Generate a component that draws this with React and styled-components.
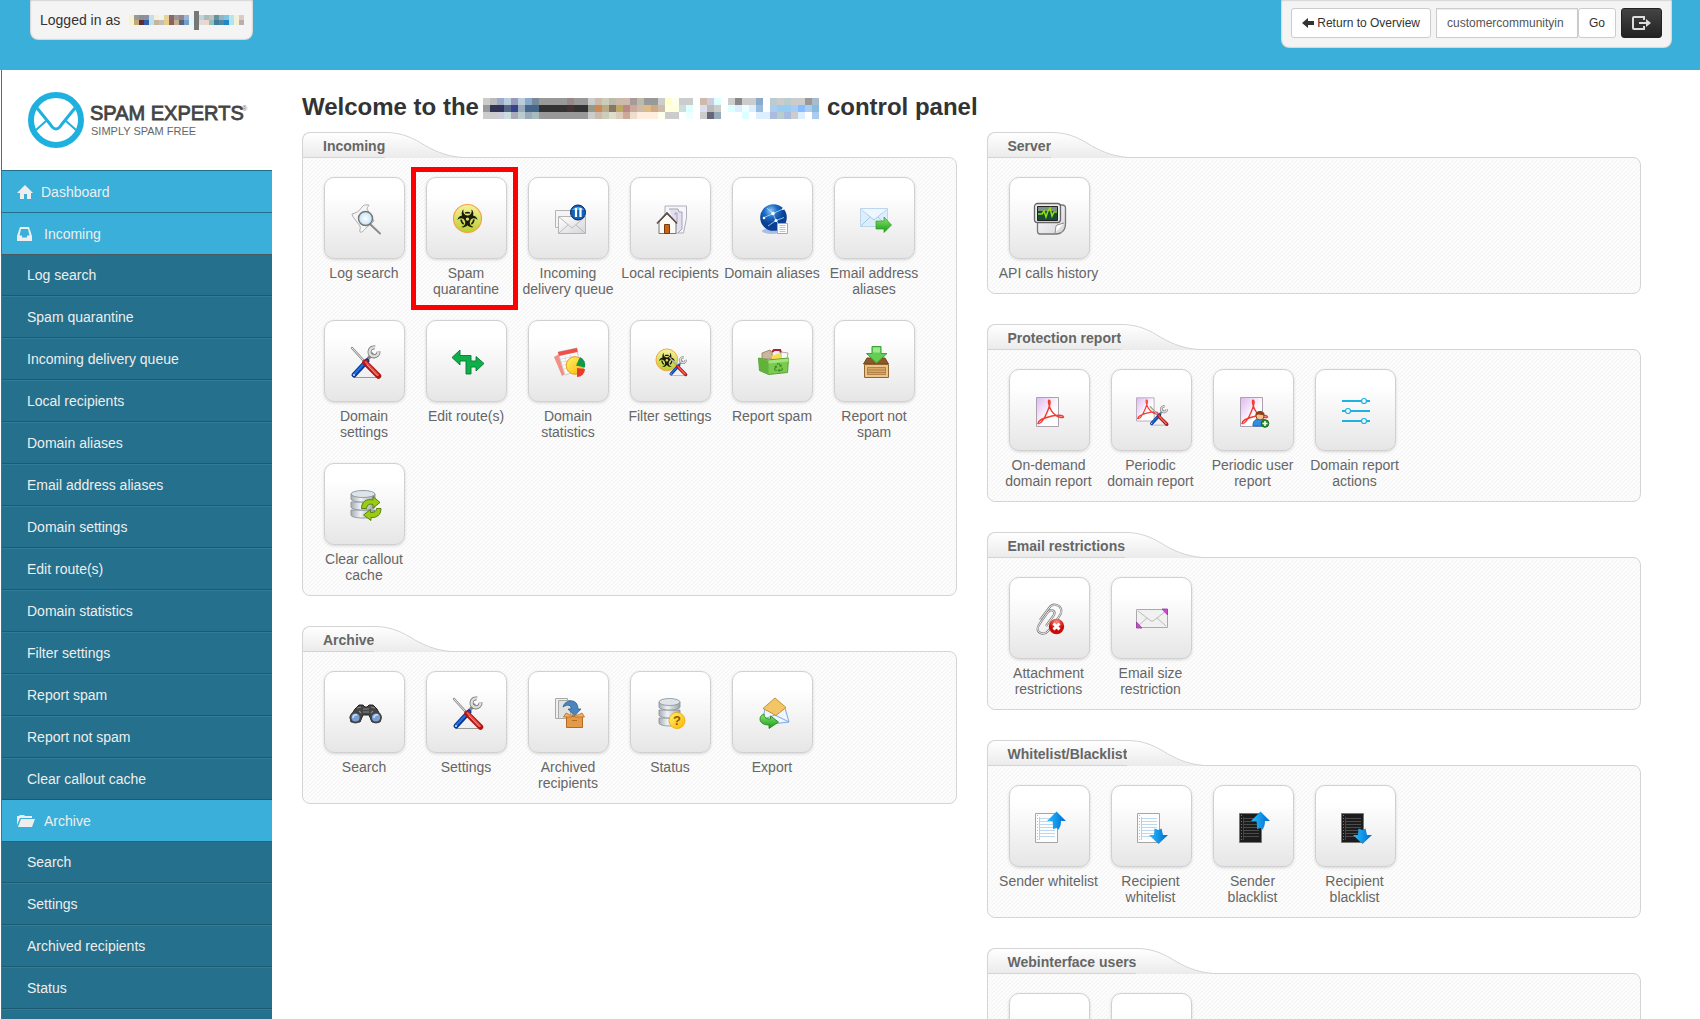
import React from "react";
import styled, { createGlobalStyle, css } from "styled-components";
import { FaBiohazard, FaRecycle } from "react-icons/fa";

const GlobalStyle = createGlobalStyle`
  * {
    box-sizing: border-box;
  }
  body {
    margin: 0;
    background: #fff;
    color: #333;
    font-family: "Liberation Sans", Arial, sans-serif;
    font-size: 14px;
  }
  a {
    color: inherit;
    text-decoration: none;
  }
`;

/* ---------- layout ---------- */

const Page = styled.div`
  display: flex;
  flex-direction: column;
  min-height: 100vh;
`;

const Header = styled.header`
  display: flex;
  flex: none;
  align-items: flex-start;
  justify-content: space-between;
  height: 70px;
  padding: 0 28px 0 30px;
  background: #3aafda;
`;

const HeaderTab = styled.div`
  display: flex;
  align-items: center;
  padding: ${(props) => (props.$tools ? "8px 10px 10px" : "12px 9px 12px 10px")};
  border-radius: 0 0 8px 8px;
  background: #f4f4f4;
  line-height: 16px;
  box-shadow: inset 0 0 2px rgba(0, 0, 0, 0.4);
`;

const Content = styled.div`
  display: flex;
  flex: 1;
  margin-left: 1px;
  border-left: 1px solid #666;
`;

const Sidebar = styled.aside`
  flex: none;
  width: 270px;
`;

const LogoLink = styled.a`
  display: block;
  height: 100px;
  padding: 20px 0 0 24px;
`;

const Main = styled.main`
  flex: 1;
  padding: 22px 59px 30px 30px;
`;

const Title = styled.h1`
  display: flex;
  align-items: center;
  margin: 0 0 10px;
  font-size: 24px;
  line-height: 30px;
  white-space: nowrap;
  svg {
    margin: 2px 8px 0 4px;
  }
`;

const Columns = styled.div`
  display: grid;
  grid-template-columns: 1fr 1fr;
  gap: 30px;
  align-items: start;
`;

const Column = styled.div`
  display: flex;
  flex-direction: column;
  gap: 30px;
`;

/* ---------- header controls ---------- */

const control = css`
  height: 30px;
  border: 1px solid #ccc;
  background: #fff;
  font-family: inherit;
  font-size: 12px;
  line-height: 18px;
`;

const Button = styled.button`
  ${control}
  display: flex;
  align-items: center;
  gap: 2px;
  padding: 0 10px;
  border-radius: 3px;
  color: #333;
  cursor: pointer;
  ${(props) =>
    props.$dark &&
    css`
      border-color: #222;
      background: linear-gradient(#444, #222);
    `}
`;

const SearchForm = styled.form`
  display: flex;
  margin: 0 5px;
`;

const SearchInput = styled.input`
  ${control}
  width: 142px;
  padding: 0 10px;
  color: #555;
  box-shadow: inset 0 1px 1px rgba(0, 0, 0, 0.08);
`;

/* ---------- sidebar ---------- */

const Nav = styled.nav`
  border-top: 1px solid #1f6f8d;
  background: #25708c;
`;

const NavHead = styled.a`
  display: flex;
  align-items: center;
  height: 42px;
  padding-left: 15px;
  border-bottom: 1px solid ${(props) => (props.$open ? "#4a5860" : "#1f6f8d")};
  background: #3aafda;
  color: #eee;
  svg {
    margin-right: 8px;
  }
`;

const NavList = styled.ul`
  margin: 0;
  padding: 0;
  list-style: none;
  li + li {
    border-top: 1px solid #2e7d9a;
  }
`;

const NavItem = styled.a`
  display: block;
  padding-left: 25px;
  border-bottom: 1px solid #1c5a72;
  color: #eee;
  line-height: 40px;
`;

/* ---------- panels ---------- */

const PanelHead = styled.div`
  display: flex;
  position: relative;
  height: 26px;
  margin-bottom: -1px;
  h2 {
    margin: 0;
    padding-left: 20px;
    border: 1px solid #d4d4d4;
    border-right: 0;
    border-radius: 8px 0 0 0;
    background: linear-gradient(#fff, #ebebeb);
    color: #666;
    font-size: 14px;
    line-height: 26px;
  }
`;

const PanelBody = styled.div`
  display: flex;
  flex-wrap: wrap;
  row-gap: 23px;
  padding: 19px 30px 12px 10px;
  border: 1px solid #d4d4d4;
  border-radius: 0 8px 8px 8px;
  background: linear-gradient(
    135deg,
    #fdfdfd 25%,
    #f7f7f7 25% 50%,
    #fdfdfd 50% 75%,
    #f7f7f7 75%
  );
  background-size: 4px 4px;
`;

const Shortcut = styled.a`
  position: relative;
  width: 102px;
  color: #666;
  text-align: center;
  line-height: 16px;
  ${(props) =>
    props.$marked &&
    css`
      &::after {
        content: "";
        position: absolute;
        inset: -10px -1px -13px -4px;
        border: 5px solid #f00;
      }
    `}
`;

const Tile = styled.span`
  display: block;
  width: 81px;
  height: 82px;
  margin: 0 0 6px 11px;
  padding: 24px 0 0 24px;
  border: 1px solid #d0d0d0;
  border-radius: 10px;
  background: linear-gradient(#fff 20%, #e6e6e6);
  box-shadow: 0 1px 3px rgba(0, 0, 0, 0.15);
  svg {
    display: block;
    overflow: visible;
  }
`;

const Label = styled.span`
  display: block;
  width: 100px;
  margin: 0 1px;
  white-space: pre-line;
`;

/* ---------- pixelated names ---------- */

const USER_ROWS = [
  "fff f4f5cf 999 8d8f97 8d8fa0 bfe0f0 f5f0da f0f4ea e4d49a 8c6666 a0949a 8f8790 a0b5d5 e5f5fa 777 c0d5d8 a8bcc0 c2c2ba 6790a0 94b4c0 7fc4e0 b5e5f0 f4f0d8 dccbc4",
  "fff f4f5cf c4a87a 5a3034 3060a8 bfe0f0 c4b4a0 c0c0bc e4d08c 8a6060 c0b090 606080 70a0c8 e5f5fa 777 dcdcdc f0d5cc 94c0bc 3f7f9c 5088a4 2088c4 b0e4f0 f4f0d8 b8b0b0",
];

const DOMAIN_ROWS = [
  "ccc bbb 9ac bcd 99b bcd 8ac 789 999 999 999 999 988 999 999 ccc cba ccb bba cba cba a99 bba 999 999 ccc ffc ffe ccc ccc fff cba ccd dff fff ccc 888 ccc ccc 8ac fff bcc ccc bcc ccc ccc 999 abc",
  "999 335 335 568 348 9ab 468 468 333 333 333 333 433 333 333 998 c85 ba8 876 ba6 b88 ca9 cba db8 ca8 cba ffd ffd cdd dff fff dde bbb ccc fff dff def eff def 9bd fff ace 9ce 9ce ace 8bf ace 8bd",
  "ccc ccc ccd cdd aab bcc 9ab abb 999 999 999 999 999 999 999 ccc cba ccb ddc dcb ca9 edc fed fed fed ffe ccc ccc fff eff fff ccc 667 9ab fff fff fff dff fff def def abd bcc abd ccc def fff ace",
];

const Mosaic = ({ rows, cell, label, children }) => {
  const count = rows[0].split(" ").length;
  return (
    <svg
      width={count * cell}
      height={rows.length * cell}
      role="img"
      aria-label={label}
      shapeRendering="crispEdges"
      overflow="visible"
    >
      {rows.map((row, y) =>
        row
          .split(" ")
          .map(
            (color, x) =>
              color !== "fff" && (
                <rect
                  key={`${x}-${y}`}
                  x={x * cell}
                  y={y * cell}
                  width={cell}
                  height={cell}
                  fill={`#${color}`}
                />
              )
          )
      )}
      {children}
    </svg>
  );
};

/* ---------- logo and small glyphs ---------- */

const Logo = () => (
  <svg width="228" height="60" role="img" aria-label="SpamExperts">
    <g fill="none" stroke="#1eb0df">
      <circle cx="30" cy="30" r="25" strokeWidth="6" />
      <path
        d="M11 18l13 16q3 5 6 5t6-5l13-16"
        strokeWidth="3"
        strokeLinejoin="round"
      />
      <path d="M10 40l10-9M50 40l-10-9" strokeWidth="2" />
    </g>
    <text
      x="64"
      y="30"
      fontSize="20"
      fill="#444"
      stroke="#444"
      strokeWidth="0.8"
    >
      SPAM EXPERTS
    </text>
    <text x="65" y="45" fontSize="11" fill="#666">
      SIMPLY SPAM FREE
    </text>
    <text x="216" y="21" fontSize="7" fill="#666">
      ®
    </text>
  </svg>
);

const HomeGlyph = () => (
  <svg width="16" height="16" fill="#eee">
    <path d="M8 1l8 8h-2v6h-4v-5H7v5H3V9H0z" />
  </svg>
);

const InboxGlyph = () => (
  <svg width="19" height="16" fill="#eee" fillRule="evenodd">
    <path d="M3 1h9l3 9v5H0v-5zM4 3L2.500 9.500H5v2h5v-2h2.500L11 3z" />
  </svg>
);

const FolderGlyph = () => (
  <svg width="19" height="16" fill="#eee">
    <path d="M0 3h2l1-1h4l1 1h7v2H3L0 12zM4 6h14l-3 8H1z" />
  </svg>
);

const BackGlyph = () => (
  <svg width="13" height="12" fill="#333">
    <path d="M0 6l6-5v3h6v4H6v3z" />
  </svg>
);

const LogoutGlyph = () => (
  <svg width="19" height="18" fill="none" stroke="#ddd" strokeWidth="2">
    <path d="M12 6V3H2q-1 0-1 1v10q0 1 1 1h10v-3M7 9h8" />
    <path d="M14 5l5 4-5 4z" fill="#ddd" stroke="none" />
  </svg>
);

/* ---------- shortcut icons, all on a 32px box ---------- */

const Gradients = () => (
  <svg width="0" height="0" style={{ position: "absolute" }} aria-hidden="true">
    <defs>
      <linearGradient id="bio" x2="0" y2="1">
        <stop stopColor="#f6f39a" />
        <stop offset="1" stopColor="#b9cf2c" />
      </linearGradient>
      <linearGradient id="gold" x2="1" y2="1">
        <stop stopColor="#fff36a" />
        <stop offset="1" stopColor="#ffb400" />
      </linearGradient>
      <linearGradient id="blueArrow">
        <stop stopColor="#25c0ff" />
        <stop offset="1" stopColor="#0069cf" />
      </linearGradient>
      <linearGradient id="green" x2="0" y2="1">
        <stop stopColor="#8be870" />
        <stop offset="1" stopColor="#169a14" />
      </linearGradient>
      <linearGradient id="steel">
        <stop stopColor="#a5adb4" />
        <stop offset="0.4" stopColor="#f0f3f5" />
        <stop offset="1" stopColor="#9aa2aa" />
      </linearGradient>
      <linearGradient id="lilac" x2="1" y2="1">
        <stop stopColor="#e0b8f0" />
        <stop offset="0.6" stopColor="#fff" />
      </linearGradient>
      <linearGradient id="paper" x2="1" y2="1">
        <stop stopColor="#fff" />
        <stop offset="1" stopColor="#d5d5d9" />
      </linearGradient>
      <radialGradient id="globe" cx="0.4" cy="0.25">
        <stop stopColor="#8ecbf5" />
        <stop offset="0.5" stopColor="#1c6cc4" />
        <stop offset="1" stopColor="#0b3f92" />
      </radialGradient>
      <radialGradient id="lens">
        <stop stopColor="#fff" />
        <stop offset="1" stopColor="#bfe2f8" />
      </radialGradient>
      <radialGradient id="red" cy="0.2">
        <stop stopColor="#ff8a80" />
        <stop offset="1" stopColor="#c80c08" />
      </radialGradient>
    </defs>
  </svg>
);

const Icon = ({ children }) => (
  <svg width="32" height="32" viewBox="0 0 32 32" aria-hidden="true">
    {children}
  </svg>
);

const ToolsShape = () => (
  <g strokeLinecap="round" fill="none">
    <path d="M5 32.500h25" stroke="#999" strokeWidth="1" />
    <path d="M3 3l12 13" stroke="#888" strokeWidth="2.400" />
    <path d="M3 3l12 13" stroke="#eee" strokeWidth="1" />
    <path d="M18 15l5-6" stroke="#888" strokeWidth="3.500" />
    <path
      d="M26 2.500a4.500 4.500 0 1 0 3.500 4"
      stroke="#777"
      strokeWidth="4"
      strokeLinecap="butt"
    />
    <path
      d="M26 2.500a4.500 4.500 0 1 0 3.500 4"
      stroke="#ddd"
      strokeWidth="2.400"
      strokeLinecap="butt"
    />
    <path d="M18 16L5 30" stroke="#0a3590" strokeWidth="5" />
    <path d="M17.500 16L5 29.500" stroke="#1e6fe0" strokeWidth="2.500" />
    <circle cx="5" cy="30" r="1" fill="#cfe2ff" />
    <path d="M16 17.500L29.500 31" stroke="#b01512" strokeWidth="5.500" />
    <path d="M16.500 17L29 30" stroke="#f05048" strokeWidth="2" />
    <path d="M18 20l10 10.500" stroke="#ffc9c4" strokeWidth="0.700" />
  </g>
);

const BioShape = () => (
  <>
    <circle
      cx="16.500"
      cy="16.500"
      r="14"
      fill="url(#bio)"
      stroke="#f7a04a"
      strokeWidth="1.200"
    />
    <FaBiohazard x="6.500" y="6.500" size={20} color="#1a1a10" />
  </>
);

const PdfShape = () => (
  <>
    <path d="M2.500 3.500h22v29h-22z" fill="url(#lilac)" stroke="#a9a0b0" />
    <path
      d="M4 29.500c0-3 7-6 14-7.500s11-.5 11.500.8-4 1-7-1-6.500-7-7.500-11-.5-5 .5-4.500.5 5-2 11-6.500 13-9.500 12.200z"
      fill="none"
      stroke="#f33b30"
      strokeWidth="1.400"
    />
  </>
);

const CylinderShape = ({ x, width }) => (
  <g
    transform={`translate(${x} 0) scale(${width / 24} 1)`}
    fill="url(#steel)"
    stroke="#8a939b"
    strokeWidth="0.900"
  >
    {[20, 12, 4].map((y) => (
      <path key={y} d={`M0 ${y + 2}v5c0 4 24 4 24 0v-5z`} />
    ))}
    <ellipse cx="12" cy="6" rx="12" ry="3.500" fill="#dfe4e8" />
  </g>
);

const ListPage = ({ dark }) => (
  <>
    <path
      d="M1.500 3.500h22v29h-22z"
      fill={dark ? "#1c1c1c" : "#fdfdfd"}
      stroke={dark ? "#777" : "#a5a5a5"}
    />
    <path
      d="M3.500 5v26"
      stroke={dark ? "#777" : "#bbb"}
      strokeDasharray="1 2"
    />
    <path d="M5.500 7v23" stroke={dark ? "#444" : "#ffb4b4"} />
    <path
      d="M6 8.500h15M6 11.500h15M6 14.500h15M6 17.500h15M6 20.500h15M6 23.500h15M6 26.500h15"
      stroke={dark ? "#4c4c4c" : "#bcd8f0"}
    />
  </>
);

const ArrowUpShape = () => (
  <path
    d="M22.500 1.500L32 11h-5c0 4-1 7-3 9l-1-2-4 1c0-2 0-5-.5-8H13z"
    fill="url(#blueArrow)"
  />
);

const ArrowDownShape = () => (
  <path
    d="M22.500 34L13 25h5l.5-6.500 4 1.500 3-1.500L27 25h5z"
    fill="url(#blueArrow)"
  />
);

const ICONS = {
  logSearch: (
    <>
      <path
        d="M3 12c4-1 8-3 10-7 1-2 4-2.500 7-2 0 1-2 2-2 4l7 12-8 7c-2 2-4 5-6 4-1-2 1-3 0-6L5 16c-1-1-2-3-2-4z"
        fill="#f6f6f6"
        stroke="#a5a5a5"
        strokeWidth="0.900"
      />
      <path
        d="M21.500 22.500L31 31.500"
        stroke="#8c8c8c"
        strokeWidth="2"
        strokeLinecap="round"
      />
      <circle
        cx="16.500"
        cy="16.500"
        r="7"
        fill="url(#lens)"
        stroke="#777"
        strokeWidth="1.500"
      />
    </>
  ),
  bio: <BioShape />,
  queue: (
    <>
      <path d="M2.500 8.500h26v17h-26z" fill="#f4f4f4" stroke="#b5b5b5" />
      <path d="M5.500 14.500h27v17h-27z" fill="url(#paper)" stroke="#b5b5b5" />
      <path
        d="M6 15l13 11 13-11M6 31l9-8M32 31l-9-8"
        fill="none"
        stroke="#bbb"
      />
      <circle cx="25" cy="10.500" r="7.500" fill="#0f63bb" stroke="#0a1f55" />
      <path d="M19 8a7 6 0 0 1 12 0z" fill="#3fb0f0" />
      <path d="M23 6v9M27.500 6v9" stroke="#fff" strokeWidth="2.200" />
    </>
  ),
  house: (
    <>
      <path
        d="M10 4h21.500v12l-3 15H15L10 20z"
        fill="#f6f5fa"
        stroke="#b0aebc"
      />
      <path
        d="M14 7h9l1 3h3v17l-4 4M20 13v-2h2v9"
        fill="#e2e0ee"
        stroke="#a5a3b5"
      />
      <path d="M4 20l8-8 9 8v11.500H4z" fill="#fcfaf4" stroke="#777" />
      <path
        d="M2 21.500l10-10.500 10 10.500"
        fill="none"
        stroke="#5c5048"
        strokeWidth="1.800"
      />
      <path d="M9.500 22.500h5v9h-5z" fill="#c9651a" stroke="#7a3a0c" />
    </>
  ),
  globe: (
    <>
      <ellipse cx="15" cy="29" rx="10" ry="3" fill="#a8bfe4" />
      <circle cx="16.500" cy="15.500" r="13.300" fill="url(#globe)" />
      <path
        d="M6 16l10-4.500 11-5M16 11.500l3 7 8-3M10 6l6 5.500M19 18.500L11 24M19 18.500l4 5"
        fill="none"
        stroke="#b8dcff"
        strokeWidth="0.800"
      />
      <g fill="#fff">
        <circle cx="16" cy="11.500" r="1.800" />
        <circle cx="19" cy="18.500" r="1.500" />
        <circle cx="7" cy="16" r="1.300" />
        <circle cx="26" cy="7" r="1" />
      </g>
      <path d="M20.500 21.500h10v10h-10z" fill="#fff" stroke="#aaa" />
      <path
        d="M22.500 23.500h6M22.500 25.500h6M22.500 27.500h6M22.500 29.500h6"
        stroke="#bbb"
        strokeWidth="0.900"
      />
    </>
  ),
  forward: (
    <>
      <path d="M1.500 6.500h27v18h-27z" fill="#dceefd" stroke="#bcd6ec" />
      <path
        d="M2 7l13 11L28 7M2 24l9-9M28 24l-9-9"
        fill="none"
        stroke="#9cc4e4"
        strokeWidth="0.900"
      />
      <path d="M2 7l13 10L28 7z" fill="#eef7ff" />
      <path
        d="M17 19h8v-4l7.500 8-7.500 7.500V27h-8z"
        fill="url(#green)"
        stroke="#2d9c20"
        strokeWidth="0.700"
      />
    </>
  ),
  tools: <ToolsShape />,
  route: (
    <path
      d="M1 12.500L9 5v5.500h11v5.500h5v-4.500l8 7-8 7.500v-4h-5v7h-5V16H9v4z"
      fill="#0fb04b"
      stroke="#067a30"
      strokeWidth="0.900"
    />
  ),
  stats: (
    <>
      <path d="M1 12l5-3 6 20-3 2z" fill="#f58e84" />
      <path d="M5 7l19-4 3 22-15 5z" fill="#fafafa" stroke="#ccc" />
      <path d="M5 7l19-4 .6 4L6 11z" fill="#ee5148" />
      <path
        d="M8 14l14-3M9 17l13-3M10 20l8-2M11 24l6-1M12 11l3 16M17 10l2 10"
        stroke="#d8d8d8"
        strokeWidth="0.800"
      />
      <circle cx="22" cy="20.500" r="8.800" fill="url(#gold)" stroke="#e3a01a" />
      <path d="M23 20.500L27 12a9 9 0 0 1 5 10.500z" fill="#12984a" />
      <path d="M24 23l8 1a8 8 0 0 1-8 8z" fill="#e83b30" />
    </>
  ),
  filter: (
    <>
      <g transform="translate(-1 2) scale(.78)">
        <BioShape />
      </g>
      <g transform="translate(13 11) scale(.6)">
        <ToolsShape />
      </g>
    </>
  ),
  spamBin: (
    <>
      <path d="M5 8l8-3 4 9H5z" fill="#cbb79c" stroke="#a08c70" />
      <path d="M15 6l9-1 1 9h-9z" fill="#f0eee8" stroke="#b5b0a5" />
      <path d="M15 7l2-2h6l1 3" fill="none" stroke="#a5232e" strokeWidth="2" />
      <path d="M24 7l7 1-1 6h-6z" fill="#f7f7f7" stroke="#aaa" />
      <path d="M15 11l8-3 2 6H15z" fill="#f6dc4e" />
      <path
        d="M1.500 13l10 2 20-2-1 14.500-19 2-9-4z"
        fill="#7ccb51"
        stroke="#57a332"
      />
      <path d="M2 13.500l9.500 2.500v13l-9-3.500z" fill="#61b23a" />
      <path d="M11.500 15.500l20-2v3l-20 2z" fill="#a5e382" />
      <FaRecycle x="17" y="18" size={9} color="#3f8f24" />
    </>
  ),
  crate: (
    <>
      <path d="M8 13h18l3.500 6h-25z" fill="#8a5a28" stroke="#70451c" />
      <path d="M5.500 19.500h24v13h-24z" fill="#ebc48c" stroke="#94662f" />
      <path
        d="M8.500 22.500h18v7h-18z"
        fill="#d8a868"
        stroke="#a8763a"
        strokeWidth="0.800"
      />
      <path d="M9 25h17M9 27.500h17" stroke="#a8763a" strokeWidth="0.800" />
      <path
        d="M13 1.500h9v7h6L17.500 18 7.500 8.500H13z"
        fill="#62cf52"
        stroke="#3fa136"
      />
      <path d="M14 2.500h7v5h-7z" fill="#9be88e" />
    </>
  ),
  cache: (
    <>
      <CylinderShape x={2} width={24} />
      <g fill="#9ccc12" stroke="#4d7a06" strokeWidth="0.900">
        <path d="M12.500 20.500c0-7 5-10 11.500-8.500V8.500l7 6-7 5.500v-3.500c-4-1-6 0-6.500 4z" />
        <path d="M32 20.500c0 7-5 9.500-10 9v3l-7.500-5.500 7-5.500v3c4 0 6-1 6-4z" />
      </g>
    </>
  ),
  binoculars: (
    <>
      <path
        d="M1 21l5-8 4-4h4l2 2h2l2-2h4l4 4 4 8-1 5h-8l-3-7h-6l-3 7H2z"
        fill="#454545"
        stroke="#222"
      />
      <path
        d="M8 12l4-1M22 11l4 1M14 13h6M14 16h6M10 15l2 2M24 15l-2 2"
        stroke="#888"
        strokeWidth="1.200"
      />
      <circle
        cx="6.500"
        cy="21.500"
        r="5"
        fill="#7a9fd8"
        stroke="#444"
        strokeWidth="1.800"
      />
      <circle
        cx="27"
        cy="21.500"
        r="5"
        fill="#7a9fd8"
        stroke="#444"
        strokeWidth="1.800"
      />
      <path
        d="M4 22a3 3 0 0 1 4-3M25 22a3 3 0 0 1 4-3"
        fill="none"
        stroke="#cfe0ff"
        strokeWidth="1.500"
      />
    </>
  ),
  archived: (
    <>
      <path d="M2.500 2.500h12v20h-12z" fill="#eef0ee" stroke="#a8aaa8" />
      <path d="M5.500 4.500h12v18h-12z" fill="#dfe3df" stroke="#a8aaa8" />
      <path
        d="M10 11c2-8 15-9 15 2h3l-6.500 7-6.500-7h3.500c0-4-4-5-8.500-2z"
        fill="#4a86bd"
        stroke="#2c6194"
        strokeWidth="0.800"
      />
      <path d="M13.500 20.500h16v11h-16z" fill="#e59a4a" stroke="#b46a20" />
      <path
        d="M13 17l-2.500 4h8l2-2.500 2 2.500h9L29 17l-4 2h-8z"
        fill="#f0b069"
        stroke="#b46a20"
        strokeWidth="0.800"
      />
      <path d="M19 24.500h5" stroke="#b46a20" />
    </>
  ),
  status: (
    <>
      <CylinderShape x={4} width={21} />
      <circle
        cx="22"
        cy="24.500"
        r="8"
        fill="url(#gold)"
        stroke="#f0a800"
        strokeWidth="0.800"
      />
      <text
        x="22"
        y="29"
        fontSize="13"
        fontWeight="bold"
        fill="#8a5a00"
        textAnchor="middle"
      >
        ?
      </text>
    </>
  ),
  exportMail: (
    <>
      <path d="M8 12l20 0 4 14-17 2-9-4z" fill="#eef5ff" stroke="#7fa6dd" />
      <path d="M32 26L18 19 7 23" fill="none" stroke="#7fa6dd" />
      <path
        d="M6 12.500L18 2l11 9.500-10 8z"
        fill="#f2c566"
        stroke="#c08a28"
        strokeWidth="0.900"
      />
      <path
        d="M7 18c-6 2-6 11 5 11v3.500l9.500-6.500-8-6v3c-4 0-6-1-6.500-5z"
        fill="url(#green)"
        stroke="#178010"
        strokeWidth="0.800"
      />
    </>
  ),
  monitor: (
    <>
      <path
        d="M22 3h6q3.500 0 3.500 3v16q0 9-9 10H6q-2.500 0-2.500-3V17"
        fill="url(#paper)"
        stroke="#777"
        strokeWidth="1.300"
      />
      <path d="M21 31c1-3 0-7 2-8s5-1 7-2" fill="#fff" stroke="#888" />
      <rect
        x="0.500"
        y="1.500"
        width="26"
        height="19"
        rx="3"
        fill="#eee"
        stroke="#666"
        strokeWidth="1.300"
      />
      <path d="M3.500 4.500h20v14h-20z" fill="#1a4a3c" stroke="#222" />
      <path d="M4 5h19v4H4z" fill="#7d9089" />
      <path
        d="M4 12h4l2-3 2 6 2-6 2-3 2 8 2-4h3"
        fill="none"
        stroke="#8fe400"
        strokeWidth="1.500"
      />
    </>
  ),
  pdf: <PdfShape />,
  pdfTools: (
    <>
      <g transform="translate(-1.500 1) scale(.8)">
        <PdfShape />
      </g>
      <g transform="translate(12.500 11) scale(.62)">
        <ToolsShape />
      </g>
    </>
  ),
  pdfUser: (
    <>
      <PdfShape />
      <path d="M15 32c0-5 2-7 7-7s7 2 7 7z" fill="#2f8fe8" stroke="#1a64b0" />
      <circle cx="22" cy="22" r="4" fill="#f4c090" stroke="#8c4a1c" />
      <path d="M17.500 21.500c-1-6 10-6 9 0-3 0-6-2-9 0z" fill="#8c4018" />
      <circle cx="27" cy="29.500" r="3.800" fill="#2c8c2c" stroke="#1c661c" />
      <path d="M27 27v5M24.500 29.500h5" stroke="#fff" strokeWidth="1.500" />
    </>
  ),
  sliders: (
    <g stroke="#1cb3e0" strokeWidth="2" fill="#f6f6f6">
      <path d="M2 7h28M2 17h28M2 27h28" />
      <g strokeWidth="1.200">
        <circle cx="24" cy="7" r="2.500" />
        <circle cx="8" cy="17" r="2.500" />
        <circle cx="24" cy="27" r="2.500" />
      </g>
    </g>
  ),
  clip: (
    <>
      <path
        d="M6 18L15 6c4-6 14-3 12 5-1 3-10 15-13 18-4 5-12 2-10-4 1-3 8-12 10-15 3-4 8-1 6 3l-8 11"
        fill="none"
        stroke="#808080"
        strokeWidth="2.200"
      />
      <path
        d="M6 18L15 6c4-6 14-3 12 5-1 3-10 15-13 18-4 5-12 2-10-4 1-3 8-12 10-15 3-4 8-1 6 3l-8 11"
        fill="none"
        stroke="#eee"
        strokeWidth="1"
      />
      <circle cx="22.500" cy="24.500" r="7.700" fill="url(#red)" />
      <path
        d="M19.500 21.500l6 6M25.500 21.500l-6 6"
        stroke="#fff"
        strokeWidth="3"
      />
    </>
  ),
  mailSize: (
    <>
      <path d="M0.500 7.500h31v18h-31z" fill="#f1f1f1" stroke="#aaa" />
      <path
        d="M2 9l13 10h2l13-10M2 24l9-8M30 24l-9-8"
        fill="none"
        stroke="#bbb"
      />
      <path
        d="M26 7h5.500v6zM0.500 20v6H6z"
        fill="#d345d6"
        stroke="#8f3a98"
        strokeWidth="0.800"
      />
    </>
  ),
  whiteUp: (
    <>
      <ListPage />
      <ArrowUpShape />
    </>
  ),
  whiteDown: (
    <>
      <ListPage />
      <ArrowDownShape />
    </>
  ),
  blackUp: (
    <>
      <ListPage dark />
      <ArrowUpShape />
    </>
  ),
  blackDown: (
    <>
      <ListPage dark />
      <ArrowDownShape />
    </>
  ),
};

/* ---------- data ---------- */

const INCOMING = [
  { label: "Log search", icon: "logSearch" },
  { label: "Spam quarantine", icon: "bio", marked: true },
  { label: "Incoming delivery queue", icon: "queue" },
  { label: "Local recipients", icon: "house" },
  { label: "Domain aliases", icon: "globe" },
  { label: "Email address aliases", icon: "forward" },
  { label: "Domain settings", icon: "tools" },
  { label: "Edit route(s)", icon: "route" },
  { label: "Domain statistics", icon: "stats" },
  { label: "Filter settings", icon: "filter" },
  { label: "Report spam", icon: "spamBin" },
  { label: "Report not spam", icon: "crate" },
  { label: "Clear callout cache", icon: "cache" },
];

const ARCHIVE = [
  { label: "Search", icon: "binoculars" },
  { label: "Settings", icon: "tools" },
  { label: "Archived recipients", icon: "archived" },
  { label: "Status", icon: "status" },
  { label: "Export", icon: "exportMail" },
];

const LEFT_PANELS = [
  { title: "Incoming", items: INCOMING },
  { title: "Archive", items: ARCHIVE },
];

const RIGHT_PANELS = [
  {
    title: "Server",
    items: [{ label: "API calls history", icon: "monitor" }],
  },
  {
    title: "Protection report",
    items: [
      { label: "On-demand domain report", icon: "pdf" },
      { label: "Periodic domain report", icon: "pdfTools" },
      { label: "Periodic user report", icon: "pdfUser" },
      { label: "Domain report actions", icon: "sliders" },
    ],
  },
  {
    title: "Email restrictions",
    items: [
      { label: "Attachment restrictions", icon: "clip" },
      { label: "Email size restriction", icon: "mailSize" },
    ],
  },
  {
    title: "Whitelist/Blacklist",
    items: [
      { label: "Sender whitelist", icon: "whiteUp" },
      { label: "Recipient whitelist", icon: "whiteDown" },
      { label: "Sender\nblacklist", icon: "blackUp" },
      { label: "Recipient blacklist", icon: "blackDown" },
    ],
  },
  {
    title: "Webinterface users",
    items: [{ label: "Manage users" }, { label: "Manage permissions" }],
  },
];

/* ---------- components ---------- */

const Panel = ({ title, items }) => (
  <section>
    <PanelHead>
      <h2>{title}</h2>
      <svg width="77" height="26" aria-hidden="true">
        <defs>
          <linearGradient id="tab" x2="0" y2="1">
            <stop stopColor="#fff" />
            <stop offset="1" stopColor="#ebebeb" />
          </linearGradient>
        </defs>
        <path
          d="M0 .5C14 .5 24 4 36 11C48 18.500 60 24 77 25.500V26H0z"
          fill="url(#tab)"
        />
        <path
          d="M0 .5C14 .5 24 4 36 11C48 18.500 60 24 77 25.500"
          fill="none"
          stroke="#d4d4d4"
        />
      </svg>
    </PanelHead>
    <PanelBody>
      {items.map((item) => (
        <Shortcut href="#" key={item.label} $marked={item.marked}>
          <Tile>
            <Icon>{ICONS[item.icon]}</Icon>
          </Tile>
          <Label>{item.label}</Label>
        </Shortcut>
      ))}
    </PanelBody>
  </section>
);

const SubMenu = ({ items }) => (
  <NavList>
    {items.map((item) => (
      <li key={item.label}>
        <NavItem href="#">{item.label}</NavItem>
      </li>
    ))}
  </NavList>
);

const App = () => (
  <Page>
    <GlobalStyle />
    <Gradients />
    <Header>
      <HeaderTab>
        Logged in as&nbsp;
        <Mosaic rows={USER_ROWS} cell={5} label="user">
          <rect x="70" y="-4" width="5" height="19" fill="#777" />
        </Mosaic>
      </HeaderTab>
      <HeaderTab $tools>
        <Button type="button">
          <BackGlyph />
          Return to Overview
        </Button>
        <SearchForm>
          <SearchInput
            type="text"
            aria-label="Domain"
            defaultValue="customercommunityin"
          />
          <Button type="button">Go</Button>
        </SearchForm>
        <Button type="button" aria-label="Log out" $dark>
          <LogoutGlyph />
        </Button>
      </HeaderTab>
    </Header>
    <Content>
      <Sidebar>
        <LogoLink href="#">
          <Logo />
        </LogoLink>
        <Nav>
          <NavHead href="#">
            <HomeGlyph />
            Dashboard
          </NavHead>
          <NavHead href="#" $open>
            <InboxGlyph />
            Incoming
          </NavHead>
          <SubMenu items={INCOMING} />
          <NavHead href="#" $open>
            <FolderGlyph />
            Archive
          </NavHead>
          <SubMenu items={ARCHIVE} />
        </Nav>
      </Sidebar>
      <Main>
        <Title>
          Welcome to the
          <Mosaic rows={DOMAIN_ROWS} cell={7} label="domain" />
          control panel
        </Title>
        <Columns>
          <Column>
            {LEFT_PANELS.map((panel) => (
              <Panel key={panel.title} {...panel} />
            ))}
          </Column>
          <Column>
            {RIGHT_PANELS.map((panel) => (
              <Panel key={panel.title} {...panel} />
            ))}
          </Column>
        </Columns>
      </Main>
    </Content>
  </Page>
);

export default App;
